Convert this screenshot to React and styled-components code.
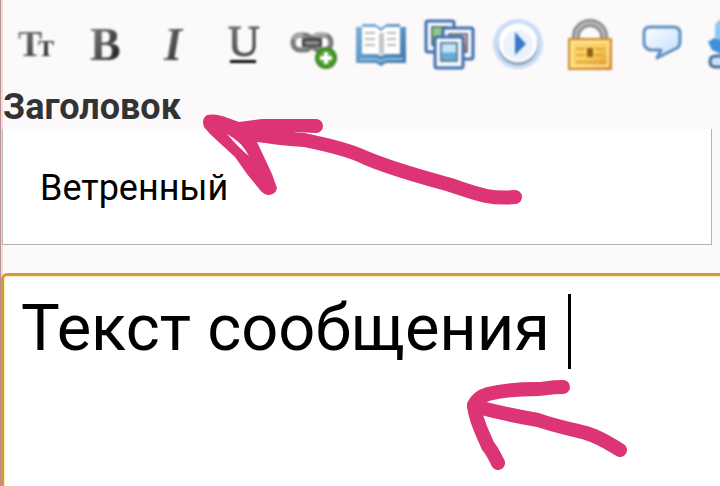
import React from "react";
import styled, { createGlobalStyle } from "styled-components";

const GlobalStyle = createGlobalStyle`
  *, *::before, *::after { box-sizing: border-box; }
  html { overflow: hidden; }
  body {
    margin: 0;
    background: #fcf9fb;
    font-family: Roboto, "Liberation Sans", sans-serif;
  }
`;

const Page = styled.main`
  position: relative;
  display: flex;
  flex-direction: column;
  min-height: 100vh;
  overflow: hidden;
  border-left: 1px solid #b98f90;
  box-shadow: inset 2px 0 #f3dada;
`;

const Toolbar = styled.div`
  display: flex;
  height: 90px;
  padding-left: 1px;
  overflow: hidden;
`;

const ToolButton = styled.button`
  flex: 0 0 69px;
  display: flex;
  padding: 0;
  border: 0;
  background: none;
  cursor: pointer;
`;

const ToolIcon = styled.svg`
  display: block;
  width: 69px;
  height: 90px;
  filter: blur(1px);
  text {
    font-family: "Liberation Serif", serif;
    fill: url(#ink);
  }
`;

const TitleField = styled.div`
  display: flex;
  flex-direction: column;
  margin: 0 8px 28px 1px;
`;

const TitleLabel = styled.label`
  height: 39px;
  padding-left: 1px;
  font-size: 36px;
  font-weight: 700;
  line-height: 34px;
  color: #333;
`;

const TitleInput = styled.input`
  height: 116px;
  width: 100%;
  padding: 2px 37px 0;
  border: 1px solid #b5b3b4;
  border-top: 0;
  border-radius: 0;
  outline: 0;
  background: #fff;
  color: #000;
  font: 400 36px/42px Roboto, "Liberation Sans", sans-serif;
`;

const MessageField = styled.div`
  position: relative;
  flex: 1;
  display: flex;
  margin: 0 -8px -8px 0;
`;

const MessageArea = styled.textarea`
  flex: 1;
  min-height: 221px;
  padding: 14px 17px;
  resize: none;
  border: 3px solid #d39c33;
  border-radius: 6px;
  outline: 0;
  box-shadow: inset 0 0 0 1px #fdecc0;
  background: #fff;
  color: #000;
  caret-color: transparent;
  overflow: hidden;
  font: 400 65px/76px Roboto, "Liberation Sans", sans-serif;
`;

const Caret = styled.span`
  position: absolute;
  top: 21px;
  left: 567px;
  width: 3px;
  height: 75px;
  background: #000;
`;

const Marks = styled.svg`
  position: absolute;
  top: 0;
  left: -1px;
  width: 720px;
  height: 486px;
  pointer-events: none;
  fill: none;
  stroke: #dc3475;
  stroke-width: 14;
  stroke-linecap: round;
  stroke-linejoin: round;
`;

const SharedDefs = styled.svg`
  position: absolute;
  width: 0;
  height: 0;
`;

function Gradients() {
  return (
    <SharedDefs aria-hidden="true">
      <defs>
        <linearGradient id="ink" x1="0" y1="0" x2="1" y2="1">
          <stop offset="0" stopColor="#858585" />
          <stop offset="0.5" stopColor="#505050" />
          <stop offset="1" stopColor="#080808" />
        </linearGradient>
        <linearGradient id="cover" x1="0" y1="0" x2="1" y2="1">
          <stop offset="0" stopColor="#7db4dc" />
          <stop offset="1" stopColor="#3f74a8" />
        </linearGradient>
        <linearGradient id="brass" x1="0" y1="0" x2="1" y2="1">
          <stop offset="0" stopColor="#fbd880" />
          <stop offset="0.5" stopColor="#fbd05f" />
          <stop offset="1" stopColor="#dd9535" />
        </linearGradient>
        <linearGradient id="speech" x1="0" y1="0" x2="1" y2="1">
          <stop offset="0" stopColor="#ffffff" />
          <stop offset="1" stopColor="#bfdcfb" />
        </linearGradient>
        <radialGradient id="plus">
          <stop offset="0" stopColor="#7cc152" />
          <stop offset="1" stopColor="#34851d" />
        </radialGradient>
      </defs>
    </SharedDefs>
  );
}

function Photo({ x, y, w, h, color, low }) {
  return (
    <g>
      <rect x={x} y={y} width={w} height={h} rx="2" fill="#f4f8fe" stroke="#3f6fac" strokeWidth="3" />
      <rect x={x + 6} y={y + 6} width={w - 12} height={h - 13} fill={color} stroke="#425d72" strokeWidth="1.5" />
      <rect x={x + 7} y={y + h / 2} width={w - 14} height={h / 2 - 8} fill={low} />
    </g>
  );
}

const tools = [
  {
    label: "Размер шрифта",
    art: (
      <text x="18" y="56" fontSize="36" fontWeight="700">
        T<tspan x="38" fontSize="24">T</tspan>
      </text>
    ),
  },
  { label: "Полужирный", art: <text x="90" y="60" fontSize="46" fontWeight="700">B</text> },
  { label: "Курсив", art: <text x="164" y="60" fontSize="46" fontWeight="700" fontStyle="italic">I</text> },
  {
    label: "Подчёркнутый",
    art: (
      <>
        <text x="228" y="56" fontSize="44" stroke="#606060" strokeWidth="1">U</text>
        <rect x="230" y="60" width="26" height="3" fill="#080808" />
      </>
    ),
  },
  {
    label: "Вставить ссылку",
    art: (
      <>
        <g fill="none" strokeLinejoin="round">
          <rect x="293" y="35" width="19" height="15" rx="7" stroke="#7a7a7a" strokeWidth="5" />
          <rect x="312" y="35" width="19" height="15" rx="7" stroke="#7a7a7a" strokeWidth="5" />
          <path d="M293 39q4-5 10-4M314 36q6-3 13-1" stroke="#bdbdbd" strokeWidth="2" />
          <path d="M302 42.500H322" stroke="#474747" strokeWidth="9" />
          <path d="M305 43H319" stroke="#8a8a8a" strokeWidth="4" />
        </g>
        <circle cx="326" cy="58" r="11" fill="url(#plus)" />
        <path d="M326 52v12M320 58h12" stroke="#fff" strokeWidth="4" />
      </>
    ),
  },
  {
    label: "Спойлер",
    art: (
      <>
        <path d="M356 27h6v-3h13l6 4 6-4h13v3h6v36h-20l-5 3-5-3h-20z" fill="url(#cover)" />
        <path d="M362 27h14l5 4 5-4h14v27h-15l-4 2-4-2h-15z" fill="#fff" />
        <path d="M379 33h5v20l-2.500 2-2.500-2z" fill="#c5c6c9" />
        <path d="M365 33h10M365 39h10M365 45h10M387 33h9M387 39h9M387 45h9" stroke="#b7babd" strokeWidth="2" />
        <path d="M360 59h16l5 2 5-2h17" fill="none" stroke="#8fc1e6" strokeWidth="2" />
      </>
    ),
  },
  {
    label: "Вставить изображение",
    art: (
      <>
        <Photo x={426} y={21} w={28} h={31} color="#93c982" low="#68af52" />
        <Photo x={443} y={28} w={30} h={31} color="#efaaa9" low="#d9696c" />
        <Photo x={435} y={37} w={28} h={31} color="#c0e5fa" low="#67add9" />
      </>
    ),
  },
  {
    label: "Вставить видео",
    art: (
      <>
        <circle cx="518" cy="44" r="25" fill="#c8ddf7" />
        <circle cx="518" cy="45" r="20" fill="#8d9bae" />
        <circle cx="518" cy="43" r="19.500" fill="#fff" />
        <circle cx="518" cy="45" r="15" fill="#eaf2fc" />
        <path d="M515 32l11 12-11 11z" fill="#3978c4" />
      </>
    ),
  },
  {
    label: "Скрытый текст",
    art: (
      <>
        <path d="M576 40v-4a14 13 0 0 1 28 0v4" fill="none" stroke="#8c8c8c" strokeWidth="8" />
        <path d="M576 38v-2a14 13 0 0 1 28 0v2" fill="none" stroke="#b8b8b8" strokeWidth="3" />
        <rect x="569" y="39" width="42" height="30" fill="url(#brass)" stroke="#cf8a28" strokeWidth="2" />
        <rect x="572" y="42" width="36" height="24" fill="none" stroke="#ffe39a" strokeWidth="2" />
        <path d="M576 49h9M576 55h9M576 62h28M595 49h9M595 55h9" stroke="#e3a53c" strokeWidth="2" />
        <rect x="587" y="48" width="6" height="9" fill="#946019" />
      </>
    ),
  },
  {
    label: "Цитата",
    art: (
      <path
        d="M650 27H673Q680 27 680 33V42Q680 46 677 48L657 58L661 50H650Q644 48 644 43V33Q644 27 650 27Z"
        fill="url(#speech)"
        stroke="#5d8fbf"
        strokeWidth="3"
        strokeLinejoin="round"
      />
    ),
  },
  {
    label: "Упомянуть пользователя",
    art: (
      <>
        <path d="M715 25q3-6 8-6v26h-8z" fill="#91c7f3" />
        <path d="M708 42l6-4 9 3v14l-11-5z" fill="#3f91dc" />
        <path d="M725 56h-9q-6 0-6 5v1q0 5 6 5h9" fill="#cfe1f5" stroke="#45709b" strokeWidth="3" />
      </>
    ),
  },
];

export default function App() {
  return (
    <>
      <GlobalStyle />
      <Gradients />
      <Page>
        <Toolbar role="toolbar" aria-label="Форматирование">
          {tools.map((tool, i) => (
            <ToolButton key={tool.label} type="button" aria-label={tool.label}>
              <ToolIcon viewBox={`${2 + 69 * i} 0 69 90`} aria-hidden="true">
                {tool.art}
              </ToolIcon>
            </ToolButton>
          ))}
        </Toolbar>
        <TitleField>
          <TitleLabel htmlFor="title">Заголовок</TitleLabel>
          <TitleInput id="title" type="text" defaultValue="Ветренный" />
        </TitleField>
        <MessageField>
          <MessageArea aria-label="Сообщение" defaultValue="Текст сообщения " spellCheck={false} />
          <Caret aria-hidden="true" />
        </MessageField>
        <Marks viewBox="0 0 720 486" aria-hidden="true">
          <path
            d="M204 127Q201 119 207 115Q216 113 228 118L239 122L262 119H316A7 7 0 0 1 316 133L294 132L300 146L257 142L272 174L277 188Q276 194 269 195Q264 195 260 190L247 174L235 157L210 134Z"
            fill="#dc3475"
            stroke="none"
          />
          <path d="M250 133C272 138 290 139 304 140C324 144 350 150 366 158C392 169 425 178 447 184C470 191 487 200 515 197" />
          <path d="M227 134Q242 142 249 156Q239 148 227 134Z" fill="#fff" stroke="none" />
          <path d="M563 387C550 387 543 389 538 389C515 389 500 391 488 394Q478 397 474 405C475 420 483 434 488 446C493 452 495 457 498 463" />
          <path d="M474 406C500 413 520 417 538 420C558 427 576 430 586 433C602 438 608 443 620 450" />
        </Marks>
      </Page>
    </>
  );
}
